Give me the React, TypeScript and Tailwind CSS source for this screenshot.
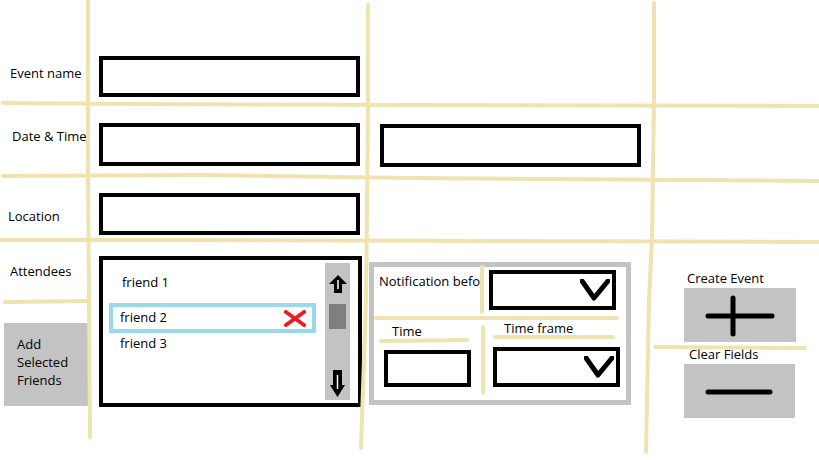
import React from 'react'

// guide lines of the sketch (paint strokes)
const guides: string[] = [
  '88,0 88,170 89,300 90,437',
  '368,5 368,120 366,300 361,448',
  '654,3 654,100 652,240 649,300 646,452',
  '3,103 140,104 410,105 819,106',
  '3,176 200,175 410,178 819,181',
  '0,240 200,240 819,242',
  '5,302 88,301',
  '376,318 617,318',
  '381,341 467,340',
  '495,337 613,337',
  '482,267 482,312',
  '483,327 483,393',
  '655,347 805,348',
]

const Chevron = () => (
  <svg width="30" height="22" viewBox="0 0 30 22">
    <polyline points="2,2 14,19 28,2" fill="none" stroke="black" strokeWidth={5} strokeLinecap="round" strokeLinejoin="round" />
  </svg>
)

const Dropdown = ({ className = '' }: { className?: string }) => (
  <div className={`flex w-[127px] h-[40px] items-center justify-end border-4 border-black pr-[2px] ${className}`}>
    <Chevron />
  </div>
)

export default function App() {
  return (
    <div className="relative w-[819px] h-[460px] overflow-hidden bg-white text-[13px] leading-[18px] text-black font-['Open_Sans',sans-serif]">
      {/* Event name */}
      <div className="flex items-start pt-[56px]">
        <div className="w-[99px] pl-[10px] pt-[8px]">Event name</div>
        <div className="w-[261px] h-[41px] border-4 border-black" />
      </div>

      {/* Date & Time */}
      <div className="mt-[26px] flex items-start">
        <div className="w-[99px] pl-[12px] pt-[4px] whitespace-nowrap">Date &amp; Time</div>
        <div className="w-[261px] h-[43px] border-4 border-black" />
        <div className="ml-[20px] mt-[1px] w-[261px] h-[43px] border-4 border-black" />
      </div>

      {/* Location */}
      <div className="mt-[26px] flex items-start">
        <div className="w-[99px] pl-[8px] pt-[14px]">Location</div>
        <div className="w-[261px] h-[42px] border-4 border-black" />
      </div>

      {/* Attendees + notification + actions */}
      <div className="mt-[21px] flex items-start">
        <div className="w-[99px]">
          <div className="pl-[10px] pt-[6px]">Attendees</div>
          <button className="mt-[43px] ml-[4px] flex h-[83px] w-[85px] flex-col items-start bg-[#c3c3c3] pl-[13px] pt-[12px] text-left">
            <span>Add</span>
            <span>Selected</span>
            <span>Friends</span>
          </button>
        </div>

        <div className="flex w-[263px] h-[151px] border-4 border-black">
          <div className="flex-1 pt-[13px]">
            <div className="pl-[19px]">friend 1</div>
            <div className="mt-[12px] ml-[6px] flex w-[207px] h-[30px] items-center justify-between border-4 border-[#99d9ea] pb-[2px] pl-[7px] pr-[6px]">
              <span>friend 2</span>
              <svg className="mt-[2px]" width="22" height="17" viewBox="0 0 22 17">
                <line x1="2" y1="2" x2="20" y2="15" stroke="#ed1c24" strokeWidth={4} strokeLinecap="round" />
                <line x1="20" y1="2" x2="2" y2="15" stroke="#ed1c24" strokeWidth={4} strokeLinecap="round" />
              </svg>
            </div>
            <div className="mt-[1px] pl-[17px]">friend 3</div>
          </div>
          {/* scrollbar */}
          <div className="my-[3px] mr-[8px] flex w-[25px] flex-col items-center bg-[#c3c3c3]">
            <svg className="mt-[11px]" width="20" height="20" viewBox="0 0 20 20">
              <polygon points="10,1 19,10 14,10 14,19 6,19 6,10 1,10" fill="black" />
              <line x1="10" y1="6" x2="10" y2="15" stroke="white" strokeWidth={1.5} />
            </svg>
            <div className="mt-[10px] w-[17px] h-[25px] bg-[#7f7f7f]" />
            <div className="flex-1" />
            <svg className="mb-[2px]" width="17" height="29" viewBox="0 0 17 29">
              <polygon points="4,1 13,1 13,16 16,16 8.5,28 1,16 4,16" fill="black" />
              <line x1="8.5" y1="6" x2="8.5" y2="20" stroke="white" strokeWidth={1.5} />
            </svg>
          </div>
        </div>

        {/* notification panel */}
        <div className="ml-[7px] mt-[6px] w-[262px] h-[143px] border-[5px] border-[#c3c3c3]">
          <div className="flex items-start">
            <div className="ml-[5px] mt-[5px] w-[104px] whitespace-nowrap">Notification befo</div>
            <Dropdown className="ml-[6px] mt-[3px]" />
          </div>
          <div className="mt-[9px] flex items-start">
            <div className="ml-[10px] pt-[3px]">
              <div className="pl-[8px]">Time</div>
              <div className="mt-[10px] w-[87px] h-[37px] border-4 border-black" />
            </div>
            <div className="ml-[22px]">
              <div className="pl-[11px]">Time frame</div>
              <Dropdown className="mt-[10px]" />
            </div>
          </div>
        </div>

        {/* actions */}
        <div className="ml-[53px] mt-[13px] flex flex-col">
          <div className="pl-[3px]">Create Event</div>
          <button className="mt-[1px] w-[112px] h-[54px] bg-[#c3c3c3]">
            <svg width="112" height="54" viewBox="0 0 112 54">
              <line x1="24" y1="28" x2="88" y2="28" stroke="black" strokeWidth={5} strokeLinecap="round" />
              <line x1="49" y1="10" x2="49" y2="46" stroke="black" strokeWidth={5} strokeLinecap="round" />
            </svg>
          </button>
          <div className="mt-[3px] pl-[5px]">Clear Fields</div>
          <button className="mt-[1px] w-[111px] h-[54px] bg-[#c3c3c3]">
            <svg width="111" height="54" viewBox="0 0 111 54">
              <line x1="24" y1="28" x2="86" y2="28" stroke="black" strokeWidth={5} strokeLinecap="round" />
            </svg>
          </button>
        </div>
      </div>

      <svg className="pointer-events-none absolute inset-0" width="819" height="460" viewBox="0 0 819 460">
        {guides.map((p, i) => (
          <polyline key={i} points={p} fill="none" stroke="#efe4b0" strokeWidth={4} strokeLinecap="round" strokeLinejoin="round" />
        ))}
      </svg>
    </div>
  )
}
